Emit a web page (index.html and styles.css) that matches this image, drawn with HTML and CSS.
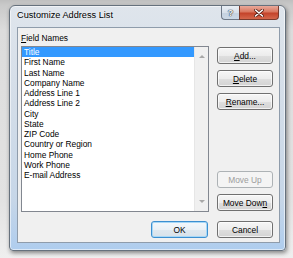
FILE: index.html
```html
<!DOCTYPE html>
<html lang="en">
<head>
    <meta charset="UTF-8">
    <title>Customize Address List</title>
    <link rel="stylesheet" href="styles.css">
</head>
<body>
    <div class="dialog">
        <div class="titlebar">
            <span class="title">Customize Address List</span>
            <div class="caption-btns">
                <span class="cap help">?</span>
                <span class="cap close">
                    <svg width="10" height="8" viewBox="0 0 10 8">
                        <path d="M1.5 1 L8.5 7 M8.5 1 L1.5 7" stroke="#5a1e14" stroke-width="3" stroke-linecap="round"/>
                        <path d="M1.5 1 L8.5 7 M8.5 1 L1.5 7" stroke="#ffffff" stroke-width="1.6" stroke-linecap="round"/>
                    </svg>
                </span>
            </div>
        </div>

        <div class="client">
            <div class="label"><u>F</u>ield Names</div>

            <div class="main">
                <div class="listbox">
                    <ul class="items">
                        <li class="selected">Title</li>
                        <li>First Name</li>
                        <li>Last Name</li>
                        <li>Company Name</li>
                        <li>Address Line 1</li>
                        <li>Address Line 2</li>
                        <li>City</li>
                        <li>State</li>
                        <li>ZIP Code</li>
                        <li>Country or Region</li>
                        <li>Home Phone</li>
                        <li>Work Phone</li>
                        <li>E-mail Address</li>
                    </ul>
                    <div class="scrollbar">
                        <span class="arrow up"></span>
                        <span class="arrow down"></span>
                    </div>
                </div>

                <div class="side">
                    <button class="btn"><u>A</u>dd...</button>
                    <button class="btn"><u>D</u>elete</button>
                    <button class="btn"><u>R</u>ename...</button>
                    <button class="btn disabled move-up">Move Up</button>
                    <button class="btn">Move Dow<u>n</u></button>
                </div>
            </div>

            <div class="footer">
                <button class="btn ok">OK</button>
                <button class="btn">Cancel</button>
            </div>
        </div>
    </div>
</body>
</html>
```

FILE: styles.css
```css
* {
    margin: 0;
    padding: 0;
    box-sizing: border-box;
}

body {
    width: 293px;
    height: 258px;
    overflow: hidden;
    padding: 5px 0 0 9px;
    font-family: 'Liberation Sans', Arial, sans-serif;
    background: linear-gradient(to bottom, #bfbfbf 0, #c9c9c9 5px, #dcdcdc 30px, #e2e2e2 200px, #efefef 258px);
}

.dialog {
    width: 277px;
    padding: 0 5px 7px 7px;
    border: 1px solid #66717d;
    border-radius: 6px 6px 4px 4px;
    background: linear-gradient(to bottom, #dfe5ec 0%, #d3dde8 40%, #c6d6e8 80%, #afcdee 100%);
    box-shadow: inset 0 0 0 1px rgba(255, 255, 255, 0.55), 1px 2px 4px rgba(0, 0, 0, 0.45);
}

.titlebar {
    height: 21px;
    display: flex;
    justify-content: space-between;
    align-items: flex-start;
}

.title {
    padding-top: 4px;
    font-size: 9.2px;
    line-height: 11px;
    color: #000;
    text-shadow: 0 0 3px rgba(255, 255, 255, 0.9);
}

.caption-btns {
    display: flex;
    margin-right: 1px;
}

.cap {
    height: 14px;
    display: flex;
    align-items: center;
    justify-content: center;
    border: 1px solid #6d7886;
    border-top: none;
}

.help {
    width: 18px;
    border-right: none;
    border-radius: 0 0 0 4px;
    background: linear-gradient(to bottom, #e9eef4 0%, #d7e0ea 50%, #c4d1df 51%, #cbd8e6 100%);
    font-size: 9px;
    font-weight: bold;
    color: #f4f6f8;
    text-shadow: 0 0 1px #38424e, 0 0 1px #38424e, 0 0 1px #38424e;
}

.close {
    width: 40px;
    border-color: #7a3a2c;
    border-radius: 0 0 4px 0;
    background: linear-gradient(to bottom, #e9a99a 0%, #d9775f 45%, #c4432a 55%, #d4674c 100%);
}

.client {
    height: 216px;
    padding: 5px 6px 4px 3px;
    border: 1px solid #8f9cab;
    background: #f0f0f0;
    display: flex;
    flex-direction: column;
    font-size: 8.4px;
    color: #000;
}

.label {
    line-height: 10px;
    height: 10px;
    margin-bottom: 3px;
}

.main {
    display: flex;
    gap: 8px;
    height: 166px;
}

.listbox {
    width: 190px;
    height: 166px;
    border: 1px solid #828790;
    background: #fff;
    display: flex;
}

.items {
    list-style: none;
    flex: 1;
}

.items li {
    height: 10.25px;
    line-height: 10.25px;
    padding-left: 2px;
    white-space: nowrap;
}

.items li.selected {
    background: #3399ff;
    color: #fff;
}

.scrollbar {
    width: 14px;
    background: #f0f0f0;
    border-left: 1px solid #e6e6e6;
    display: flex;
    flex-direction: column;
    justify-content: space-between;
    align-items: center;
    padding: 8px 0 8px;
}

.arrow {
    width: 0;
    height: 0;
    border-left: 3px solid transparent;
    border-right: 3px solid transparent;
}

.arrow.up {
    border-bottom: 3px solid #a8a8a8;
}

.arrow.down {
    border-top: 3px solid #a8a8a8;
}

.side {
    width: 56px;
    display: flex;
    flex-direction: column;
    gap: 6px;
    padding: 1px 0;
}

.btn {
    height: 17px;
    width: 56px;
    border: 1px solid #707070;
    border-radius: 3px;
    background: linear-gradient(to bottom, #f6f6f6 0%, #ececec 50%, #dfdfdf 51%, #d3d3d3 100%);
    box-shadow: inset 0 0 0 1px rgba(255, 255, 255, 0.7);
    font-family: inherit;
    font-size: 8.4px;
    color: #000;
}

.move-up {
    margin-top: auto;
}

.btn.disabled {
    border-color: #adb2b5;
    background: #f4f4f4;
    color: #9c9c9c;
    box-shadow: none;
}

.footer {
    display: flex;
    justify-content: flex-end;
    gap: 9px;
    margin-top: 9px;
}

.btn.ok {
    width: 57px;
    border-color: #3c8fd0;
    background: linear-gradient(to bottom, #f4f8fb 0%, #eaf1f6 50%, #dfe8ef 51%, #d8e2ea 100%);
    box-shadow: inset 0 0 0 1px #a7d8f7;
}
```
